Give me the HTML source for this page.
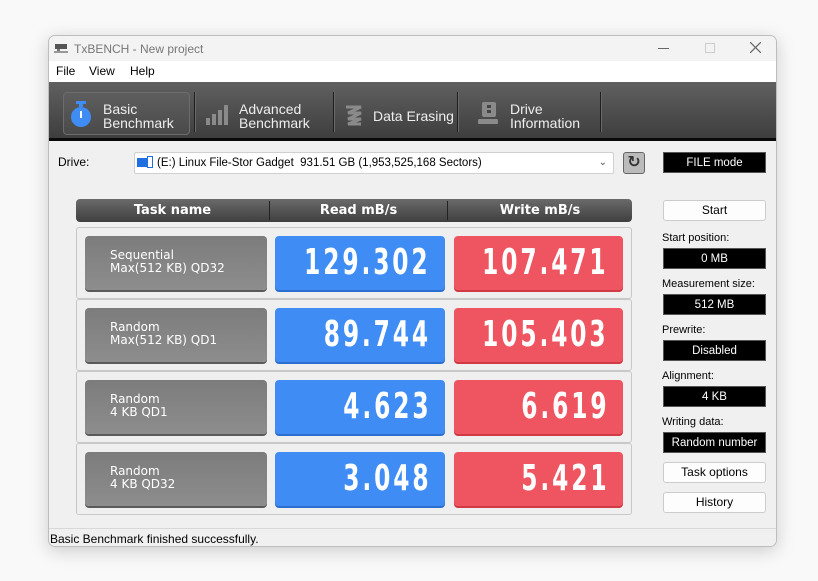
<!DOCTYPE html>
<html><head><meta charset="utf-8"><style>
*{box-sizing:border-box;margin:0;padding:0}
body{width:818px;height:581px;background:#f9f9f9;position:relative;overflow:hidden;font-family:"Liberation Sans","DejaVu Sans",sans-serif;font-size:12px;color:#000}
.win{position:absolute;left:48px;top:35px;width:729px;height:512px;background:#f0f0f0;border:1px solid #bdbdbd;border-radius:7px;overflow:hidden;box-shadow:0 4px 18px rgba(0,0,0,.18)}
.abs{position:absolute}
.title{left:0;top:0;width:729px;height:25px;background:#f3f3f3}
.menu{left:0;top:25px;width:729px;height:21px;background:#fff}
.tb{left:0;top:46px;width:729px;height:59px;background:linear-gradient(#606060,#3e3e3e);border-bottom:3px solid #0a0a0a}
.tbtn{color:#eee;font-size:14px;line-height:14px}
.sep{width:2px;height:40px;background:#1e1e1e;border-right:1px solid #6a6a6a}
.hdr{left:27px;top:163px;width:556px;height:23px;border-radius:4px;background:linear-gradient(#6a6a6a,#3f3f3f);color:#fff;font-weight:bold;font-size:13px;font-family:"DejaVu Sans",sans-serif}
.row{left:27px;width:556px;height:72px;border:1px solid #c8c8c8;border-radius:3px;background:#efefef}
.lab{left:8px;top:8px;width:182px;height:54px;border-radius:4px;background:linear-gradient(#7c7c7c,#8d8d8d);box-shadow:0 2px 0 #5a5a5a;color:#fff;font-family:"DejaVu Sans",sans-serif;font-size:12px;line-height:13px;padding:13px 0 0 25px}
.val{top:8px;width:170px;height:54px;border-radius:4px;color:#fff;font-family:"DejaVu Sans Condensed","DejaVu Sans",sans-serif;font-weight:bold;font-size:36px;line-height:54px}
.val span{position:absolute;right:14px;top:0;transform:scaleX(0.72);transform-origin:right center;letter-spacing:4px;white-space:nowrap}
.blue{left:198px;background:#3f8df4;box-shadow:0 2px 0 #2a6fd0}
.red{left:377px;width:169px;background:#ef5561;box-shadow:0 2px 0 #d03a45}
.btn{left:614px;width:103px;height:21px;background:#fdfdfd;border:1px solid #ccc;border-radius:3px;text-align:center;line-height:19px;font-size:12px}
.blk{left:614px;width:103px;height:21px;background:#000;color:#fff;text-align:center;line-height:21px;font-size:11.5px;border:1px solid #555}
.rl{left:613px;font-size:11px}
</style></head><body>
<div class="win">
<div class="abs title">
 <svg class="abs" style="left:5px;top:6px" width="15" height="13"><rect x="1" y="2" width="12" height="5" fill="#555"/><rect x="3" y="7" width="3" height="4" fill="#777"/><rect x="0" y="9" width="14" height="2" fill="#999"/></svg>
 <div class="abs" style="left:25px;top:6px;color:#777;font-size:12px">TxBENCH - New project</div>
 <div class="abs" style="left:609px;top:12px;width:11px;height:1px;background:#666"></div>
 <div class="abs" style="left:656px;top:7px;width:10px;height:10px;border:1px solid #ccc"></div>
 <svg class="abs" style="left:701px;top:6px" width="11" height="11" stroke="#666" stroke-width="1.2"><path d="M0 0L11 11M11 0L0 11"/></svg>
</div>
<div class="abs menu"><span class="abs" style="left:7px;top:3px">File</span><span class="abs" style="left:40px;top:3px">View</span><span class="abs" style="left:81px;top:3px">Help</span></div>
<div class="abs tb">
 <div class="abs" style="left:14px;top:10px;width:127px;height:43px;border-radius:4px;background:linear-gradient(#5e5e5e,#4a4a4a);border:1px solid #6c6c6c"></div>
 <svg class="abs" style="left:21px;top:19px" width="22" height="27"><rect x="6" y="0" width="10" height="3" fill="#3f8df4"/><rect x="9" y="2" width="4" height="4" fill="#3f8df4"/><circle cx="11" cy="16" r="10" fill="#3f8df4"/><rect x="10" y="10" width="2" height="7" fill="#fff"/></svg>
 <div class="abs tbtn" style="left:54px;top:20px">Basic<br>Benchmark</div>
 <div class="abs sep" style="left:145px;top:10px"></div>
 <svg class="abs" style="left:157px;top:23px" width="24" height="20"><rect x="0" y="13" width="4" height="7" fill="#8a8a8a"/><rect x="6" y="9" width="4" height="11" fill="#8a8a8a"/><rect x="12" y="5" width="4" height="15" fill="#8a8a8a"/><rect x="18" y="0" width="4" height="20" fill="#8a8a8a"/></svg>
 <div class="abs tbtn" style="left:190px;top:20px">Advanced<br>Benchmark</div>
 <div class="abs sep" style="left:284px;top:10px"></div>
 <svg class="abs" style="left:295px;top:22px" width="20" height="22" fill="none" stroke="#8a8a8a" stroke-width="3"><path d="M2 3h15L4 9h13L4 15h13L4 20h13"/></svg>
 <div class="abs tbtn" style="left:324px;top:27px">Data Erasing</div>
 <div class="abs sep" style="left:408px;top:10px"></div>
 <svg class="abs" style="left:429px;top:20px" width="22" height="24"><rect x="4" y="0" width="14" height="15" rx="2" fill="#8a8a8a"/><rect x="9" y="3" width="4" height="3" fill="#444"/><rect x="9" y="8" width="4" height="3" fill="#444"/><rect x="0" y="17" width="20" height="5" rx="1" fill="#8a8a8a"/></svg>
 <div class="abs tbtn" style="left:461px;top:20px">Drive<br>Information</div>
 <div class="abs sep" style="left:551px;top:10px"></div>
</div>
<div class="abs" style="left:9px;top:119px">Drive:</div>
<div class="abs" style="left:85px;top:116px;width:480px;height:22px;background:#fff;border:1px solid #d0d0d0;border-radius:2px;font-size:11.5px;line-height:20px;padding-left:2px">
 <span style="display:inline-block;width:10px;height:9px;background:#1f6fe0;vertical-align:-1px"></span><span style="display:inline-block;width:6px;height:12px;border:1px solid #1f6fe0;vertical-align:-2px;margin-right:4px"></span>(E:) Linux File-Stor Gadget&nbsp; 931.51 GB (1,953,525,168 Sectors)
 <span class="abs" style="right:6px;top:0;color:#555;font-size:10px">&#8964;</span></div>
<div class="abs" style="left:574px;top:116px;width:22px;height:22px;border:1px solid #666;border-radius:3px;background:#bbb;text-align:center;font-size:16px;line-height:20px;color:#333;font-weight:bold">↻</div>
<div class="abs blk" style="top:116px;height:21px">FILE mode</div>
<div class="abs hdr"><span class="abs" style="left:0;width:193px;text-align:center;top:4px">Task name</span><span class="abs" style="left:193px;top:2px;width:1px;height:19px;background:#222"></span><span class="abs" style="left:194px;width:177px;text-align:center;top:4px">Read mB/s</span><span class="abs" style="left:371px;top:2px;width:1px;height:19px;background:#222"></span><span class="abs" style="left:372px;width:184px;text-align:center;top:4px">Write mB/s</span></div>
<div class="abs row" style="top:191px"><div class="abs lab">Sequential<br>Max(512 KB) QD32</div><div class="abs val blue"><span>129.302</span></div><div class="abs val red"><span>107.471</span></div></div>
<div class="abs row" style="top:263px"><div class="abs lab">Random<br>Max(512 KB) QD1</div><div class="abs val blue"><span>89.744</span></div><div class="abs val red"><span>105.403</span></div></div>
<div class="abs row" style="top:335px"><div class="abs lab">Random<br>4 KB QD1</div><div class="abs val blue"><span>4.623</span></div><div class="abs val red"><span>6.619</span></div></div>
<div class="abs row" style="top:407px"><div class="abs lab">Random<br>4 KB QD32</div><div class="abs val blue"><span>3.048</span></div><div class="abs val red"><span>5.421</span></div></div>
<div class="abs btn" style="top:164px">Start</div>
<div class="abs rl" style="top:196px">Start position:</div><div class="abs blk" style="top:212px">0 MB</div>
<div class="abs rl" style="top:242px">Measurement size:</div><div class="abs blk" style="top:258px">512 MB</div>
<div class="abs rl" style="top:288px">Prewrite:</div><div class="abs blk" style="top:304px">Disabled</div>
<div class="abs rl" style="top:334px">Alignment:</div><div class="abs blk" style="top:350px">4 KB</div>
<div class="abs rl" style="top:380px">Writing data:</div><div class="abs blk" style="top:396px">Random number</div>
<div class="abs btn" style="top:426px">Task options</div>
<div class="abs btn" style="top:456px">History</div>
<div class="abs" style="left:0;top:492px;width:729px;height:20px;border-top:1px solid #d8d8d8;background:#f0f0f0"><span class="abs" style="left:1px;top:3px">Basic Benchmark finished successfully.</span><span class="abs" style="left:728px;top:0;width:1px;height:20px;background:#ddd"></span></div>
</div>
</body></html>
